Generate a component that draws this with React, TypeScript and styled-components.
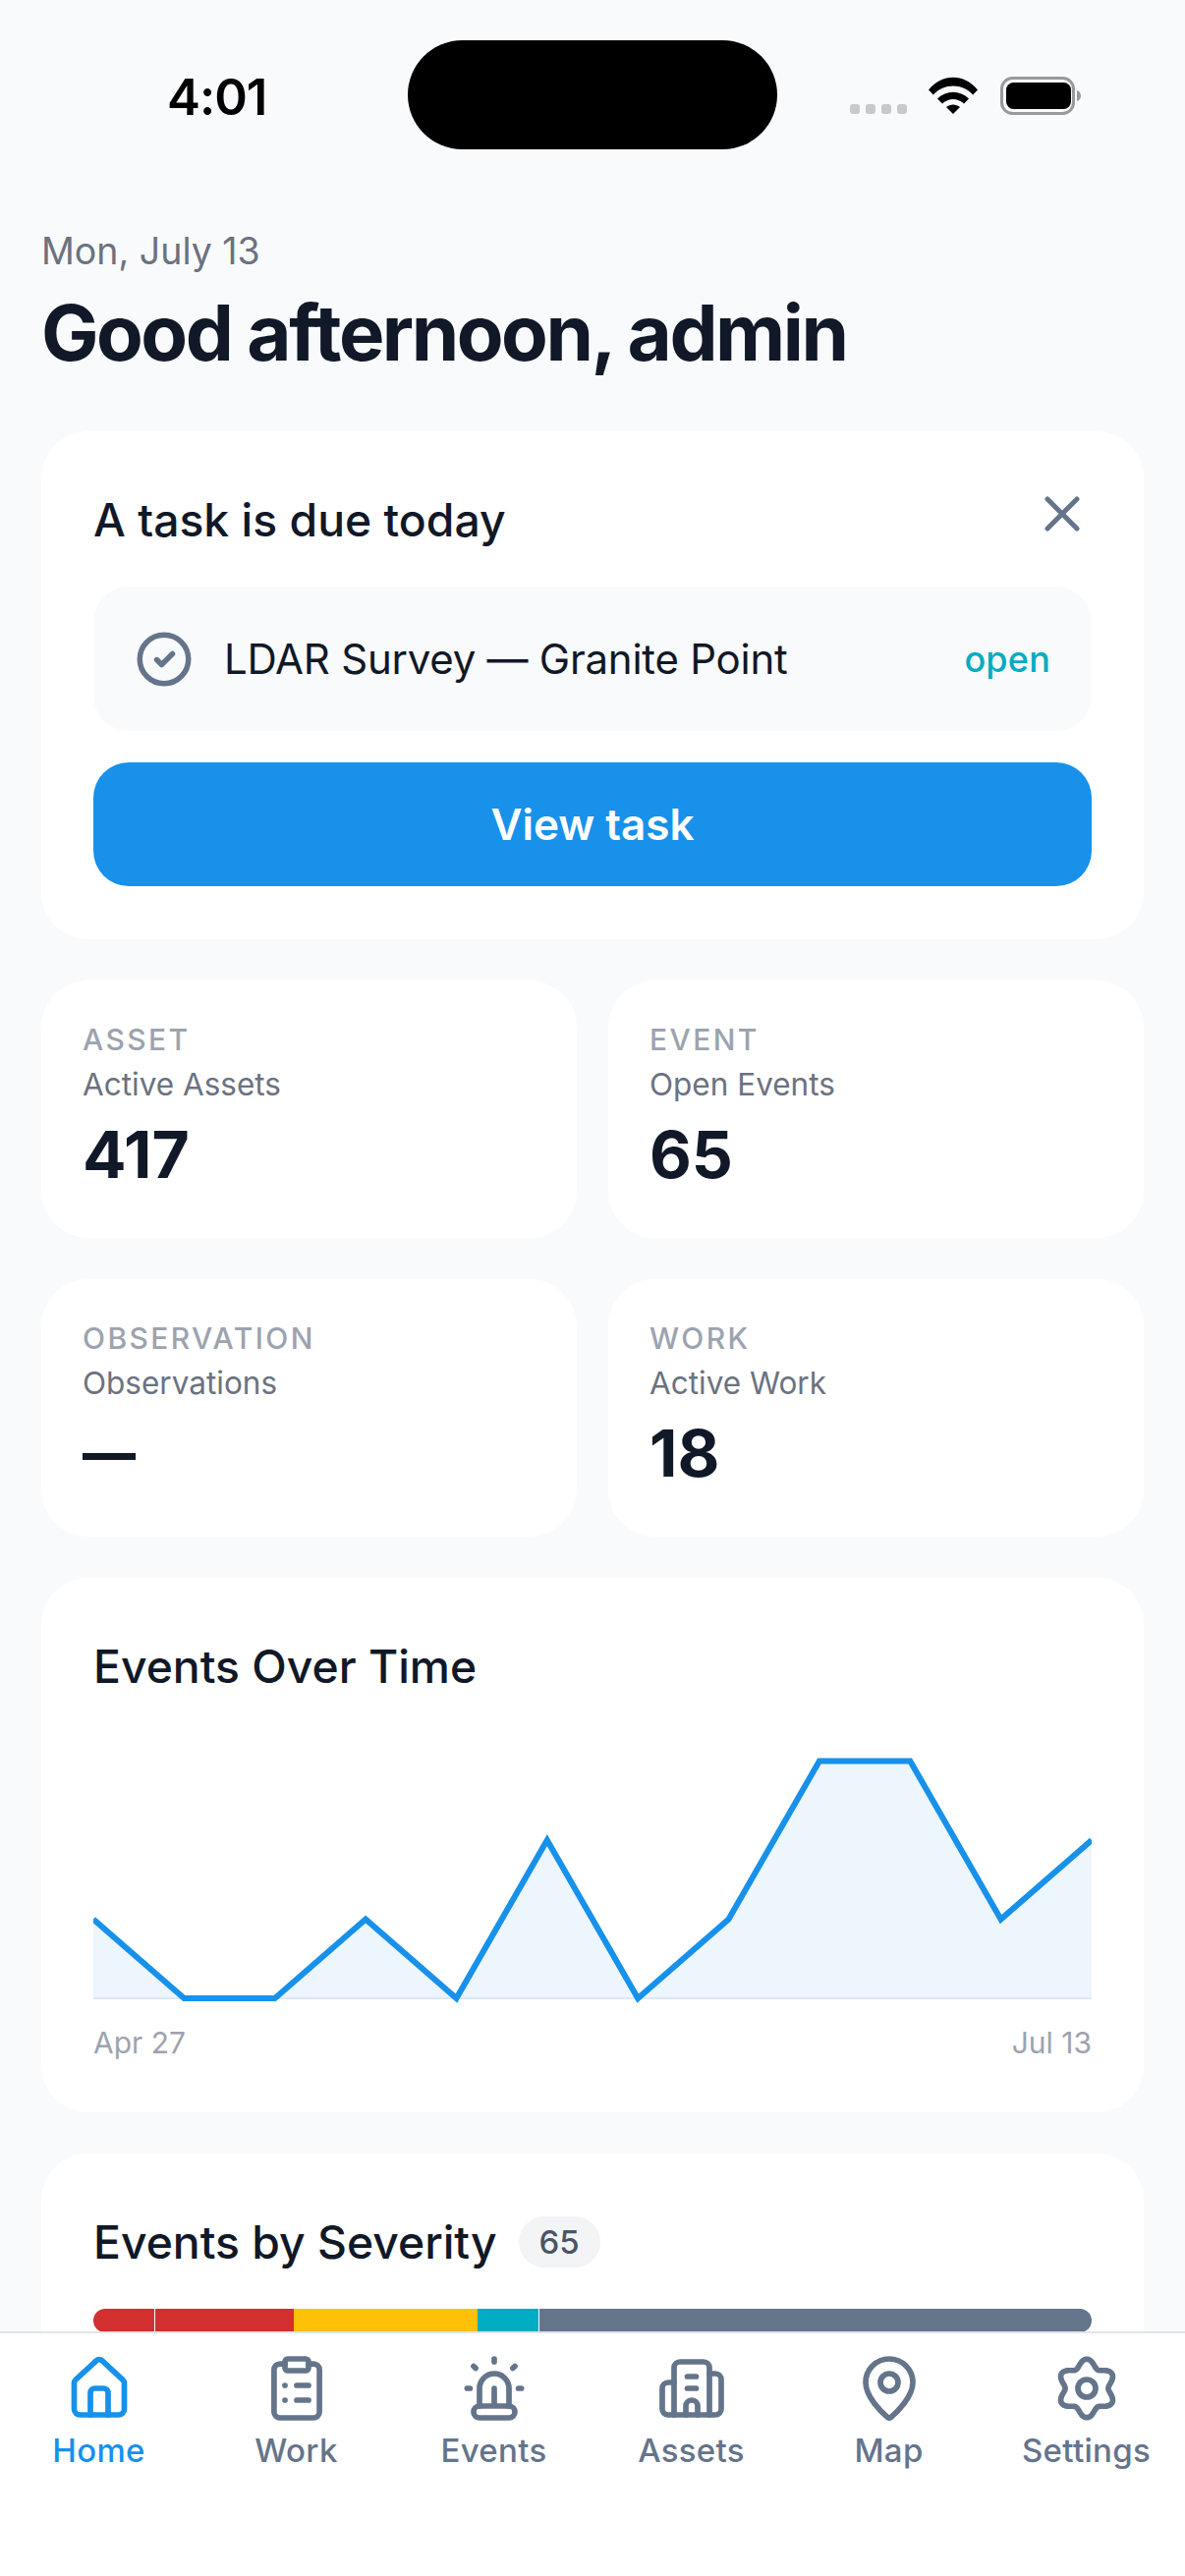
import React from 'react';
import styled, { createGlobalStyle } from 'styled-components';

const FONT = 'Inter, "Noto Sans", sans-serif';
const INK = '#111827';
const SLATE = '#64748B';
const BLUE = '#1791EA';

const GlobalStyle = createGlobalStyle`
  * { box-sizing: border-box; }
  html, body { margin: 0; padding: 0; background: #f9fafb; }
  body { font-family: ${FONT}; }
`;

const Screen = styled.div`
  width: 1206px;
  height: 2622px;
  display: flex;
  flex-direction: column;
  overflow: hidden;
  background: #f9fafc;
`;

const StatusBar = styled.div`
  flex: none;
  display: grid;
  grid-template-columns: 415px 376px 1fr;
  height: 152px;
  padding-top: 41px;
  margin-bottom: 80px;
`;

const Clock = styled.div`
  padding: 4px 0 0 170px;
  align-self: center;
  font-size: 51px;
  font-weight: 600;
  letter-spacing: -1px;
  color: #000;
`;

const Island = styled.div`
  height: 111px;
  border-radius: 56px;
  background: #000;
`;

const StatusIcons = styled.div`
  display: flex;
  align-items: flex-start;
  padding: 37px 0 0 74px;
`;

const SignalDots = styled.div`
  display: flex;
  gap: 6px;
  margin: 28px 22px 0 0;
`;

const SignalDot = styled.span`
  width: 10px;
  height: 10px;
  border-radius: 3px;
  background: #c9c9c9;
`;

const Scroll = styled.main`
  flex: 1;
  min-height: 0;
  overflow: hidden;
  padding: 0 42px;
  display: flex;
  flex-direction: column;
  gap: 42px;
`;

const Header = styled.header`
  margin-bottom: 10px;
`;

const DateLine = styled.div`
  font-size: 37.5px;
  line-height: 48px;
  color: #6b7280;
`;

const Greeting = styled.h1`
  margin: 11px 0 0;
  font-size: 78px;
  line-height: 96px;
  font-weight: 700;
  letter-spacing: -2.5px;
  color: ${INK};
`;

const Card = styled.section`
  flex: none;
  background: #fff;
  border-radius: 48px;
  padding: 54px 53px;
`;

const CardHead = styled.div`
  display: flex;
  align-items: center;
  justify-content: space-between;
  height: 72px;
`;

const CardTitle = styled.h2`
  margin: 0;
  font-size: 46.3px;
  line-height: 72px;
  font-weight: 500;
  color: ${INK};
`;

const CloseButton = styled.button`
  display: flex;
  padding: 0;
  border: 0;
  background: none;
  margin: -12px 9px 0 0;
`;

const TaskRow = styled.div`
  display: flex;
  align-items: center;
  height: 147px;
  margin-top: 32px;
  padding: 0 42px 0 39px;
  border-radius: 36px;
  background: #f9fafb;
`;

const TaskName = styled.span`
  flex: 1;
  margin-left: 28px;
  font-size: 42px;
  letter-spacing: -0.25px;
  color: ${INK};
`;

const TaskState = styled.span`
  font-size: 36px;
  font-weight: 500;
  letter-spacing: 0.2px;
  color: #00acc1;
`;

const PrimaryButton = styled.button`
  display: block;
  width: 100%;
  height: 126px;
  margin-top: 32px;
  border: 0;
  border-radius: 36px;
  background: ${BLUE};
  font-family: ${FONT};
  font-size: 44px;
  font-weight: 600;
  color: #fff;
`;

const StatGrid = styled.div`
  flex: none;
  display: grid;
  grid-template-columns: 1fr 1fr;
  column-gap: 32px;
  row-gap: 42px;
`;

const StatCard = styled.div`
  height: 262px;
  padding: 42px;
  background: #fff;
  border-radius: 48px;
`;

const StatKind = styled.div`
  font-size: 30px;
  line-height: 36px;
  font-weight: 500;
  letter-spacing: 2.4px;
  color: #9ca3af;
`;

const StatLabel = styled.div`
  margin-top: 6px;
  font-size: 31.5px;
  line-height: 44px;
  color: #6b7280;
`;

const StatValue = styled.div<{ $empty?: boolean }>`
  margin-top: 9px;
  font-size: ${(p) => (p.$empty ? 54 : 66)}px;
  line-height: 80px;
  font-weight: ${(p) => (p.$empty ? 800 : 700)};
  color: ${INK};
`;

const ChartWrap = styled.div`
  margin-top: 49px;
`;

const ChartSvg = styled.svg`
  display: block;
  width: 100%;
  height: 260px;
`;

const AxisRow = styled.div`
  display: flex;
  justify-content: space-between;
  margin-top: 21px;
  font-size: 30px;
  line-height: 34px;
  color: #9ca3af;
`;

const TitleRow = styled.div`
  display: flex;
  align-items: center;
  gap: 22px;
  height: 72px;
`;

const CountBadge = styled.span`
  display: flex;
  align-items: center;
  justify-content: center;
  width: 83px;
  height: 52px;
  border-radius: 26px;
  background: #f3f4f6;
  font-size: 33px;
  font-weight: 500;
  color: #4b5563;
`;

const SeverityBar = styled.div`
  display: flex;
  height: 24px;
  margin-top: 32px;
  border-radius: 12px;
  overflow: hidden;
`;

const SeveritySegment = styled.div<{ $color: string; $grow: number; $divider?: boolean }>`
  flex: ${(p) => p.$grow} 0 0;
  background: ${(p) => p.$color};
  border-right: ${(p) => (p.$divider ? '1px solid #fff' : 'none')};
`;

const TabBar = styled.nav`
  flex: none;
  display: grid;
  grid-template-columns: repeat(6, 1fr);
  height: 249px;
  padding-top: 20px;
  background: #fff;
  border-top: 2px solid #e1e3e6;
`;

const Tab = styled.div<{ $active?: boolean }>`
  display: flex;
  flex-direction: column;
  align-items: center;
  color: ${(p) => (p.$active ? BLUE : SLATE)};
`;

const TabLabel = styled.span`
  margin-top: 5px;
  font-size: 33px;
  line-height: 44px;
  font-weight: 500;
  letter-spacing: 0.3px;
`;

const Icon = ({ children }: { children: React.ReactNode }) => (
  <svg
    width="72"
    height="72"
    viewBox="0 0 24 24"
    fill="none"
    stroke="currentColor"
    strokeWidth="1.9"
    strokeLinecap="round"
    strokeLinejoin="round"
  >
    {children}
  </svg>
);

// six soft lobes around the centre of the 24 unit icon box
const gearPath = Array.from({ length: 145 }, (_, i) => {
  const a = (i / 144) * Math.PI * 2;
  const r = 8.6 + 1.3 * Math.cos(6 * a);
  return `${i === 0 ? 'M' : 'L'}${(12 + r * Math.sin(a)).toFixed(2)} ${(12 - r * Math.cos(a)).toFixed(2)}`;
}).join(' ');

const tabs = [
  {
    label: 'Home',
    icon: (
      <>
        <path d="M3.5 10.2a1.6 1.6 0 0 1 .5-1.1L11 2.6a1.5 1.5 0 0 1 2 0l7 6.5a1.6 1.6 0 0 1 .5 1.1V19a2 2 0 0 1-2 2h-13a2 2 0 0 1-2-2z" />
        <path d="M9 21v-7.5a1.5 1.5 0 0 1 1.5-1.5h3a1.5 1.5 0 0 1 1.5 1.5V21" />
      </>
    ),
  },
  {
    label: 'Work',
    icon: (
      <>
        <rect x="8" y="2" width="8" height="4" rx="1" />
        <path d="M8 3.7H6.3a2 2 0 0 0-2 2V20a2 2 0 0 0 2 2h11.4a2 2 0 0 0 2-2V5.7a2 2 0 0 0-2-2H16" />
        <path d="M8 11h.01M8 16h.01M12 11h4M12 16h4" />
      </>
    ),
  },
  {
    label: 'Events',
    icon: (
      <>
        <path d="M7 18v-6a5 5 0 0 1 10 0v6" />
        <path d="M12 12v5" />
        <rect x="5" y="18" width="14" height="4" rx="2" />
        <path d="M12 2v1M5 4.500l.7.7M19 4.500l-.7.7M2.800 12h1M20.200 12h1" />
      </>
    ),
  },
  {
    label: 'Assets',
    icon: (
      <>
        <path d="M6 21V5a2 2 0 0 1 2-2h8a2 2 0 0 1 2 2v16" />
        <path d="M18 7h2a2 2 0 0 1 2 2v10a2 2 0 0 1-2 2H4a2 2 0 0 1-2-2v-7a2 2 0 0 1 2-2h2" />
        <path d="M10.500 8h3M10.500 12h3" />
        <path d="M10 21v-3a2 2 0 0 1 4 0v3" />
      </>
    ),
  },
  {
    label: 'Map',
    icon: (
      <>
        <path d="M20 10c0 4.993-5.539 10.193-7.399 11.799a1 1 0 0 1-1.202 0C9.539 20.193 4 14.993 4 10a8 8 0 0 1 16 0" />
        <circle cx="12" cy="10" r="3" />
      </>
    ),
  },
  {
    label: 'Settings',
    icon: (
      <>
        <path d={gearPath} />
        <circle cx="12" cy="12" r="3" />
      </>
    ),
  },
];

const stats = [
  { kind: 'ASSET', label: 'Active Assets', value: '417' },
  { kind: 'EVENT', label: 'Open Events', value: '65' },
  { kind: 'OBSERVATION', label: 'Observations', value: '—' },
  { kind: 'WORK', label: 'Active Work', value: '18' },
];

const severity = [
  { color: '#D32F2F', grow: 4, divider: true },
  { color: '#D32F2F', grow: 9 },
  { color: '#FFC107', grow: 12 },
  { color: '#00ACC1', grow: 4, divider: true },
  { color: '#64748B', grow: 36 },
];

// weekly event counts, drawn on a 1016 wide plot
const series = [1, 0, 0, 1, 0, 2, 0, 1, 3, 3, 1, 2];
const STEP = 1016 / 11;
const LEVEL = 80.5;
const BASE = 253;
const linePoints = series
  .map((v, i) => `${(i * STEP).toFixed(1)},${BASE - v * LEVEL}`)
  .join(' ');

const EventsChart = () => (
  <ChartSvg viewBox="0 0 1016 260" preserveAspectRatio="none">
    <polygon points={`0,${BASE} ${linePoints} 1016,${BASE}`} fill="#edf5fd" />
    <line x1="0" x2="1016" y1={BASE} y2={BASE} stroke="#dbe9f7" strokeWidth="2" />
    <polyline points={linePoints} fill="none" stroke={BLUE} strokeWidth="6" strokeLinejoin="miter" />
  </ChartSvg>
);

const WifiGlyph = () => (
  <svg width="50" height="38" viewBox="0 0 50 38" style={{ marginRight: 23 }}>
    <path d="M0 13.500C13.500 -3.500 36.500 -3.500 50 13.500L45.200 18.500C34.500 6.500 15.500 6.500 4.800 18.500Z" fill="#000" />
    <path d="M9 22.500C18 13.500 32 13.500 41 22.500L36 27.500C29.500 21.500 20.500 21.500 14 27.500Z" fill="#000" />
    <path d="M18 31C22 27.500 28 27.500 32 31L25 38Z" fill="#000" />
  </svg>
);

const BatteryGlyph = () => (
  <svg width="82" height="39" viewBox="0 0 82 39">
    <rect x="1.500" y="1.500" width="73" height="36" rx="11" fill="none" stroke="#999" strokeWidth="3" />
    <rect x="6" y="6" width="66" height="27" rx="7.500" fill="#000" />
    <path d="M78 14c2.500.8 4 3 4 5.500s-1.500 4.700-4 5.500z" fill="#999" />
  </svg>
);

export default function App() {
  return (
    <>
      <GlobalStyle />
      <Screen>
        <StatusBar>
          <Clock>4:01</Clock>
          <Island />
          <StatusIcons>
            <SignalDots>
              <SignalDot />
              <SignalDot />
              <SignalDot />
              <SignalDot />
            </SignalDots>
            <WifiGlyph />
            <BatteryGlyph />
          </StatusIcons>
        </StatusBar>

        <Scroll>
          <Header>
            <DateLine>Mon, July 13</DateLine>
            <Greeting>Good afternoon, admin</Greeting>
          </Header>

          <Card>
            <CardHead>
              <CardTitle>A task is due today</CardTitle>
              <CloseButton aria-label="Dismiss">
                <svg width="42" height="42" viewBox="0 0 42 42" fill="none" stroke={SLATE} strokeWidth="5" strokeLinecap="round">
                  <path d="M6 6l30 30M36 6L6 36" />
                </svg>
              </CloseButton>
            </CardHead>
            <TaskRow>
              <svg width="66" height="66" viewBox="0 0 24 24" fill="none" stroke={SLATE} strokeWidth="2" strokeLinecap="round" strokeLinejoin="round">
                <circle cx="12" cy="12" r="9" />
                <path d="M9.300 12.200l1.800 1.800 4-4" />
              </svg>
              <TaskName>LDAR Survey — Granite Point</TaskName>
              <TaskState>open</TaskState>
            </TaskRow>
            <PrimaryButton>View task</PrimaryButton>
          </Card>

          <StatGrid>
            {stats.map((s) => (
              <StatCard key={s.kind}>
                <StatKind>{s.kind}</StatKind>
                <StatLabel>{s.label}</StatLabel>
                <StatValue $empty={s.value === '—'}>{s.value}</StatValue>
              </StatCard>
            ))}
          </StatGrid>

          <Card>
            <CardTitle>Events Over Time</CardTitle>
            <ChartWrap>
              <EventsChart />
              <AxisRow>
                <span>Apr 27</span>
                <span>Jul 13</span>
              </AxisRow>
            </ChartWrap>
          </Card>

          <Card>
            <TitleRow>
              <CardTitle>Events by Severity</CardTitle>
              <CountBadge>65</CountBadge>
            </TitleRow>
            <SeverityBar>
              {severity.map((s, i) => (
                <SeveritySegment key={i} $color={s.color} $grow={s.grow} $divider={s.divider} />
              ))}
            </SeverityBar>
          </Card>
        </Scroll>

        <TabBar>
          {tabs.map((t, i) => (
            <Tab key={t.label} $active={i === 0}>
              <Icon>{t.icon}</Icon>
              <TabLabel>{t.label}</TabLabel>
            </Tab>
          ))}
        </TabBar>
      </Screen>
    </>
  );
}
